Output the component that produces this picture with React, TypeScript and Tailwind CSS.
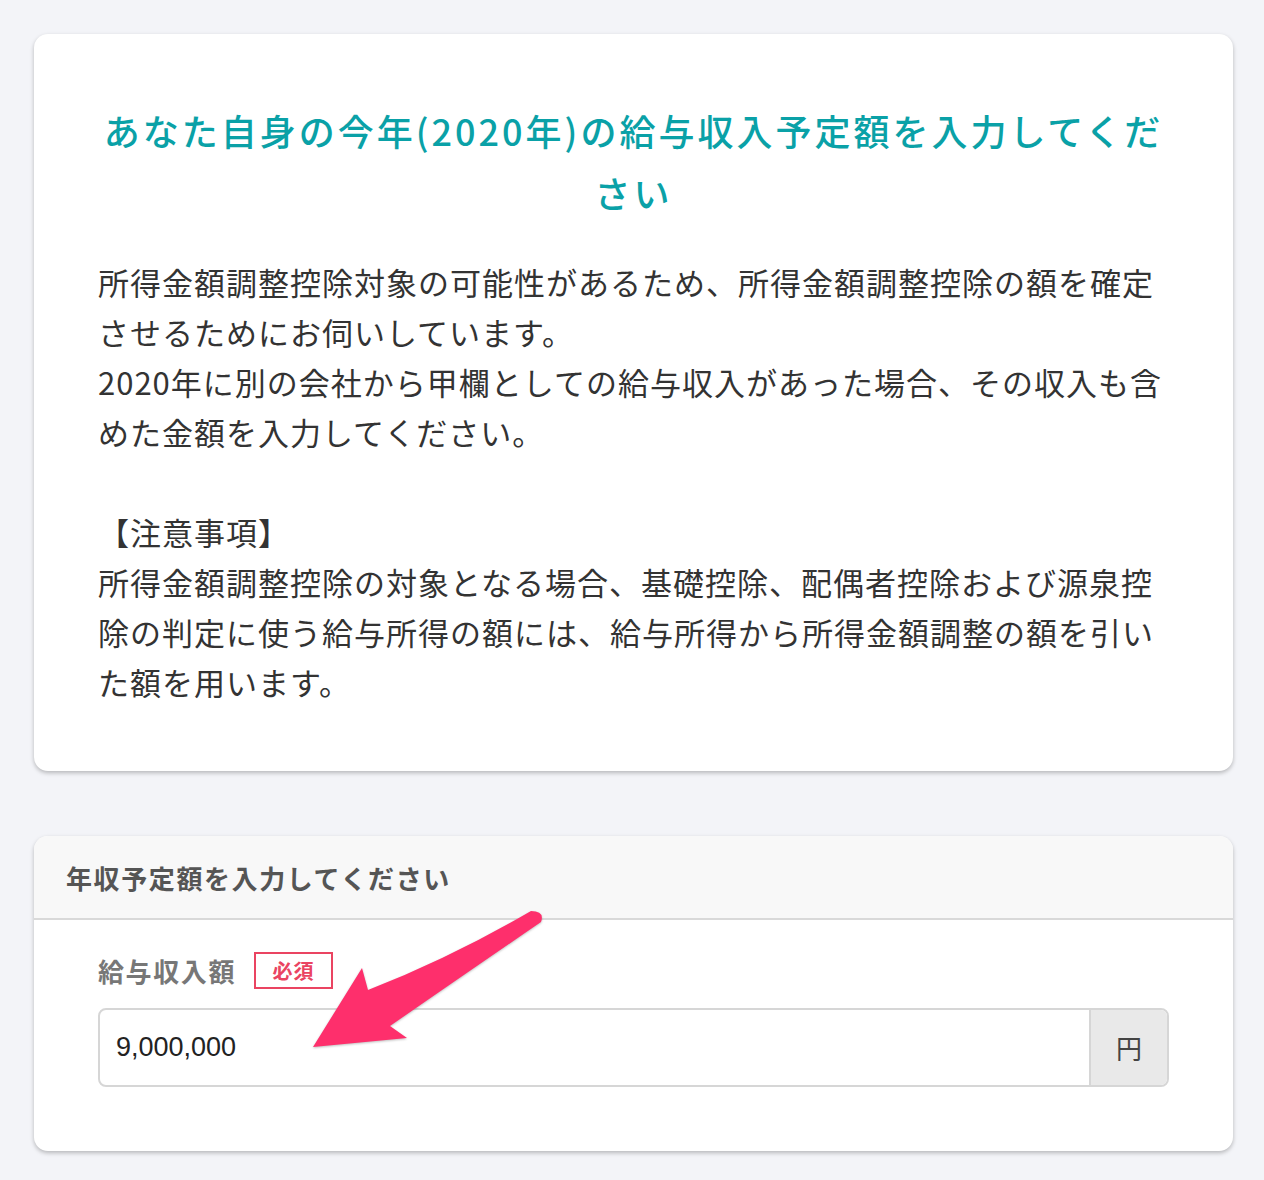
import React from 'react';

const jp = "font-['Noto_Sans_CJK_JP','Noto_Sans',sans-serif]";

function PointerArrow() {
  return (
    <svg
      className="absolute left-[300px] top-[900px] drop-shadow-[0_1px_1px_rgba(0,0,0,0.25)]"
      width="250"
      height="160"
      viewBox="0 0 250 160"
    >
      <path
        d="M231 11 Q150 58 68 90 L62 68 L13 147 L107 138 L90 126 Q168 72 241 22 Q245 11 231 11 Z"
        fill="#fe2f6c"
      />
    </svg>
  );
}

export default function App() {
  return (
    <div className={`relative min-h-[1180px] bg-[#f3f4f8] pt-[34px] pb-[30px] ${jp}`}>
      <div className="ml-[34px] w-[1199px] rounded-[14px] bg-white px-[64px] pt-[65px] pb-[64px] shadow-[0_2px_4px_rgba(0,0,0,0.25)]">
        <h1 className="text-center text-[36px] font-medium leading-[62px] tracking-[3px] text-[#0aa1a7]">
          あなた自身の今年(2020年)の給与収入予定額を入力してください
        </h1>
        <div className="mt-[34px] text-[31px] leading-[50px] tracking-[1px] text-[#333]">
          <p>所得金額調整控除対象の可能性があるため、所得金額調整控除の額を確定させるためにお伺いしています。</p>
          <p>2020年に別の会社から甲欄としての給与収入があった場合、その収入も含めた金額を入力してください。</p>
          <p className="h-[50px]"></p>
          <p>【注意事項】</p>
          <p>所得金額調整控除の対象となる場合、基礎控除、配偶者控除および源泉控除の判定に使う給与所得の額には、給与所得から所得金額調整の額を引いた額を用います。</p>
        </div>
      </div>

      <div className="ml-[34px] mt-[65px] w-[1199px] overflow-hidden rounded-[14px] bg-white shadow-[0_2px_4px_rgba(0,0,0,0.25)]">
        <div className="flex h-[84px] items-center border-b-2 border-[#d9d9d9] bg-[#f8f8f8] px-[32px]">
          <h2 className="text-[26px] font-bold tracking-[1.6px] text-[#555]">年収予定額を入力してください</h2>
        </div>
        <div className="px-[64px] pt-[31px] pb-[64px]">
          <div className="flex items-center gap-[18px]">
            <span className="text-[26px] font-bold tracking-[1.6px] text-[#777]">給与収入額</span>
            <span className="flex h-[37px] w-[79px] items-center justify-center border-2 border-[#ea4461] text-[20px] font-bold tracking-[1px] text-[#ea4461]">
              必須
            </span>
          </div>
          <div className="mt-[18px] flex h-[79px] overflow-hidden rounded-[8px] border-2 border-[#d6d6d6]">
            <div className="flex flex-1 items-center px-[16px] font-['Liberation_Sans',Arial,sans-serif] text-[27px] text-[#222]">
              9,000,000
            </div>
            <div className="flex w-[78px] items-center justify-center border-l-2 border-[#d6d6d6] bg-[#e9e9e9] text-[26px] text-[#444]">
              円
            </div>
          </div>
        </div>
      </div>

      <PointerArrow />
    </div>
  );
}
